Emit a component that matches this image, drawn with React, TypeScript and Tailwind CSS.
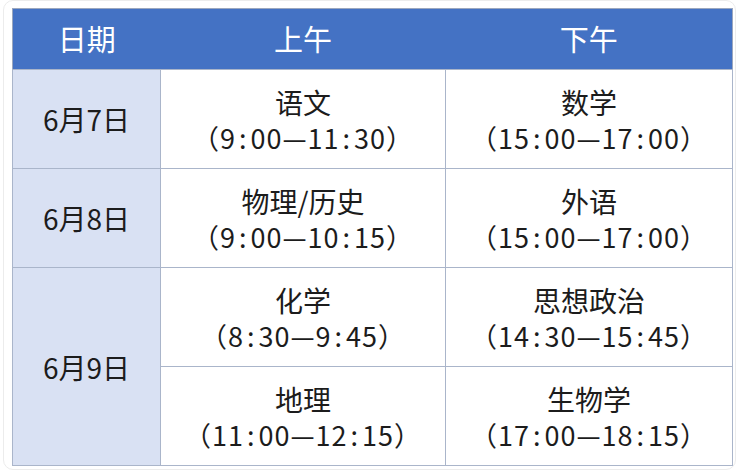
const font = { fontFamily: '"Noto Sans CJK SC", "Noto Sans", sans-serif' };

type Exam = { subject: string; time: string };

const rows: { date: string; am: Exam; pm: Exam; span?: number; skipDate?: boolean }[] = [
  { date: "6月7日", am: { subject: "语文", time: "（9:00—11:30）" }, pm: { subject: "数学", time: "（15:00—17:00）" } },
  { date: "6月8日", am: { subject: "物理/历史", time: "（9:00—10:15）" }, pm: { subject: "外语", time: "（15:00—17:00）" } },
  { date: "6月9日", span: 2, am: { subject: "化学", time: "（8:30—9:45）" }, pm: { subject: "思想政治", time: "（14:30—15:45）" } },
  { date: "", skipDate: true, am: { subject: "地理", time: "（11:00—12:15）" }, pm: { subject: "生物学", time: "（17:00—18:15）" } },
];

// colons in the picture sit wider apart than the font gives them
function Time({ text }: { text: string }) {
  const parts = text.split(":");
  return (
    <div className="text-[27px] tracking-[1px]">
      {parts.map((p, i) => (
        <span key={i}>
          {i > 0 && <span className="px-[3px]">:</span>}
          {p}
        </span>
      ))}
    </div>
  );
}

function Cell({ exam }: { exam: Exam }) {
  return (
    <td className="border border-[#aab5ca] bg-white text-center align-middle leading-[36px] text-[#1c1c1c]">
      <div className="pt-[1px] text-[28px]">{exam.subject}</div>
      <Time text={exam.time} />
    </td>
  );
}

export default function App() {
  return (
    <div className="w-[739px] h-[472px] bg-white" style={font}>
      <div className="mx-[3px] h-[470px] rounded-[10px] border border-[#ececec] pl-[8px] pr-[4px] pt-[7px]">
        <table className="w-[720px] table-fixed border-collapse border border-[#9ba7be]">
          <colgroup>
            <col className="w-[148px]" />
            <col className="w-[285px]" />
            <col className="w-[287px]" />
          </colgroup>
          <thead>
            <tr className="h-[61px] bg-[#4472c4] text-[29px] text-white">
              <th className="font-normal">日期</th>
              <th className="font-normal">上午</th>
              <th className="font-normal">下午</th>
            </tr>
          </thead>
          <tbody>
            {rows.map((r, i) => (
              <tr key={i} className="h-[99px]">
                {!r.skipDate && (
                  <td
                    rowSpan={r.span}
                    className="border border-[#aab5ca] bg-[#d9e1f3] text-center align-middle text-[28px] text-[#1c1c1c]"
                  >
                    {r.date}
                  </td>
                )}
                <Cell exam={r.am} />
                <Cell exam={r.pm} />
              </tr>
            ))}
          </tbody>
        </table>
      </div>
    </div>
  );
}
